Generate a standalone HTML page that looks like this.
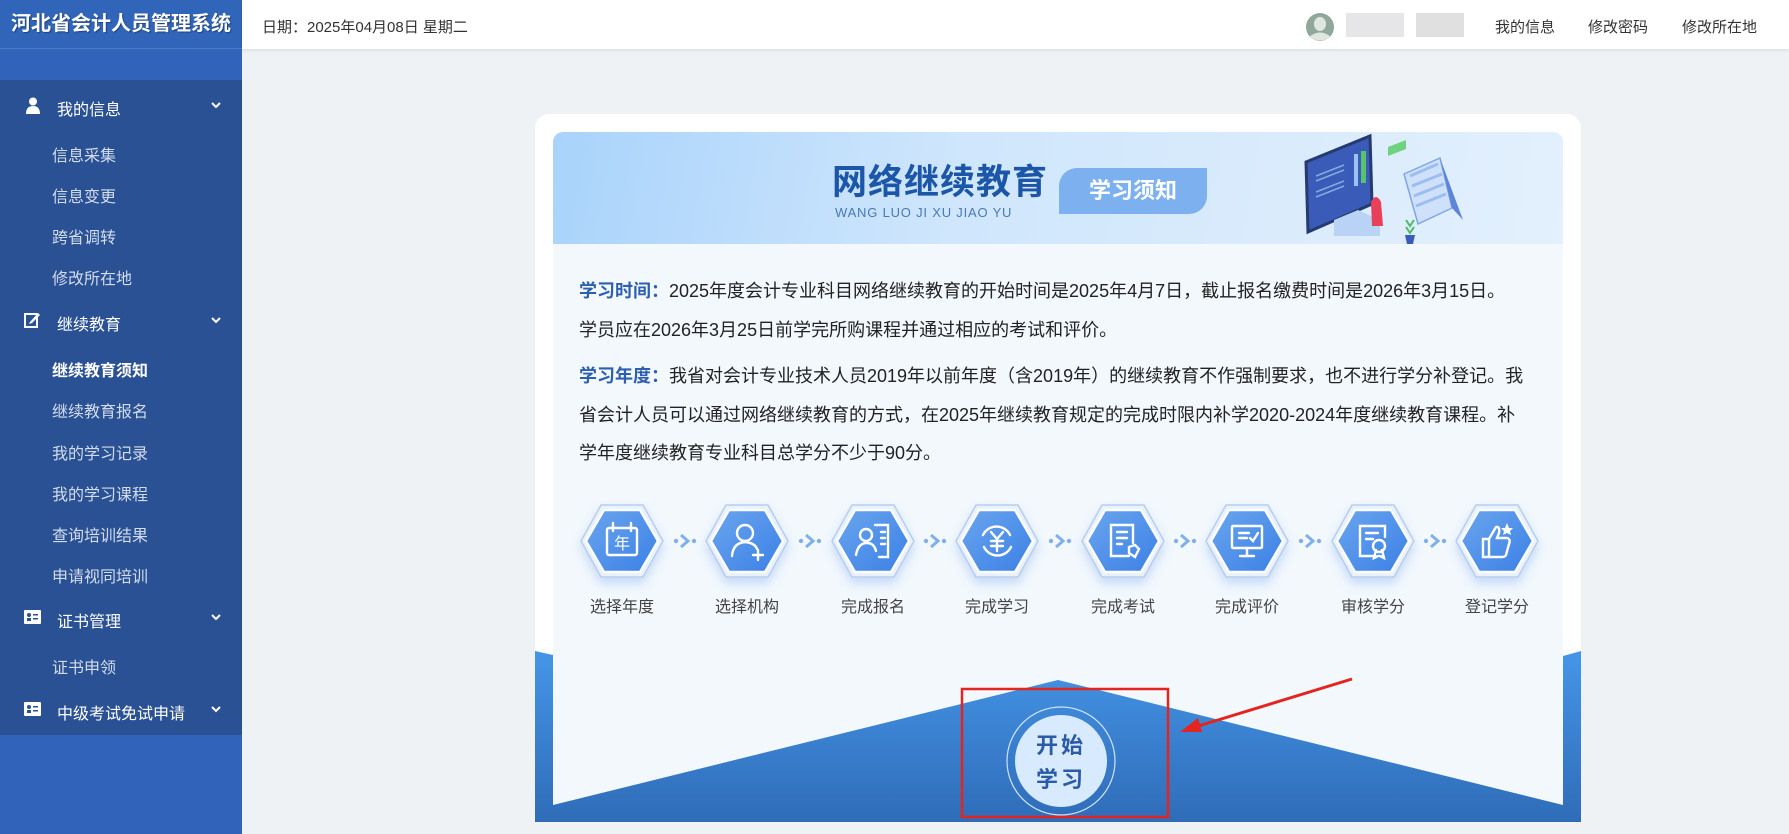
<!DOCTYPE html>
<html><head><meta charset="utf-8"><style>
*{margin:0;padding:0;box-sizing:border-box}
body{width:1789px;height:834px;overflow:hidden;background:#eef2f5;font-family:"Liberation Sans","Noto Sans CJK SC",sans-serif;position:relative}
.abs{position:absolute}
#side{left:0;top:0;width:242px;height:834px;background:#3063b9}
#logo{left:0;top:0;width:242px;height:49px;background:#3165b9;color:#fff;font-weight:bold;font-size:20px;line-height:49px;text-align:center;border-bottom:1px solid #4a7cc9;text-shadow:1px 1px 1px rgba(0,0,0,.35);white-space:nowrap}
#menu{left:0;top:80px;width:242px;height:655px;background:#2a5194}
.mh{position:absolute;left:57px;color:#fff;font-size:16px}
.mi{position:absolute;left:52px;color:#d3dcec;font-size:16px}
.chev{position:absolute;left:211px}
#top{left:242px;top:0;width:1547px;height:49px;background:#fff;box-shadow:0 1px 3px rgba(0,0,0,.1)}
.tx{position:absolute;top:16px;font-size:15px;color:#333}
#card{left:535px;top:114px;width:1046px;height:708px;background:#fff;border-radius:14px 14px 0 0}
#inner{left:553px;top:244px;width:1010px;height:578px;background:#f3f8fd}
#banner{left:553px;top:132px;width:1010px;height:112px;border-radius:10px 10px 0 0;background:linear-gradient(100deg,#a9d3fb 0%,#cfe6fc 40%,#d9ebfc 70%,#e3f0fd 100%)}
.p{position:absolute;left:579px;font-size:18px;color:#222;white-space:nowrap}
.p b{color:#2d5fb0}
</style></head><body>
<div id="side" class="abs"></div>
<div id="logo" class="abs">河北省会计人员管理系统</div>
<div id="menu" class="abs">
 <svg class="abs" style="left:25px;top:17px" width="16" height="18" viewBox="0 0 16 18"><circle cx="8" cy="4.5" r="4" fill="#fff"/><path d="M1 17 Q1 9 8 9 Q15 9 15 17Z" fill="#fff"/></svg>
 <div class="mh" style="top:16px">我的信息</div><svg class="chev" style="top:22px" width="10" height="8" viewBox="0 0 10 8"><path d="M1 1 L5 5 L9 1" stroke="#fff" stroke-width="2" fill="none"/></svg>
 <div class="mi" style="top:62px">信息采集</div>
 <div class="mi" style="top:103px">信息变更</div>
 <div class="mi" style="top:144px">跨省调转</div>
 <div class="mi" style="top:185px">修改所在地</div>
 <svg class="abs" style="left:24px;top:231px" width="17" height="17" viewBox="0 0 17 17"><rect x="1" y="3" width="12" height="13" fill="none" stroke="#fff" stroke-width="2"/><path d="M6 11 L14 2 L16 4 L8 12 L5 13Z" fill="#fff"/></svg>
 <div class="mh" style="top:231px">继续教育</div><svg class="chev" style="top:237px" width="10" height="8" viewBox="0 0 10 8"><path d="M1 1 L5 5 L9 1" stroke="#fff" stroke-width="2" fill="none"/></svg>
 <div class="mi" style="top:277px;color:#fff;font-weight:bold">继续教育须知</div>
 <div class="mi" style="top:318px">继续教育报名</div>
 <div class="mi" style="top:360px">我的学习记录</div>
 <div class="mi" style="top:401px">我的学习课程</div>
 <div class="mi" style="top:442px">查询培训结果</div>
 <div class="mi" style="top:483px">申请视同培训</div>
 <svg class="abs" style="left:24px;top:530px" width="17" height="14" viewBox="0 0 17 14"><rect x="0" y="0" width="17" height="14" rx="1" fill="#fff"/><circle cx="5" cy="5" r="2" fill="#2a5194"/><rect x="9" y="4" width="5" height="1.5" fill="#2a5194"/><rect x="9" y="8" width="5" height="1.5" fill="#2a5194"/><rect x="3" y="8" width="4" height="3" fill="#2a5194"/></svg>
 <div class="mh" style="top:528px">证书管理</div><svg class="chev" style="top:534px" width="10" height="8" viewBox="0 0 10 8"><path d="M1 1 L5 5 L9 1" stroke="#fff" stroke-width="2" fill="none"/></svg>
 <div class="mi" style="top:574px">证书申领</div>
 <svg class="abs" style="left:24px;top:622px" width="17" height="14" viewBox="0 0 17 14"><rect x="0" y="0" width="17" height="14" rx="1" fill="#fff"/><circle cx="5" cy="5" r="2" fill="#2a5194"/><rect x="9" y="4" width="5" height="1.5" fill="#2a5194"/><rect x="9" y="8" width="5" height="1.5" fill="#2a5194"/><rect x="3" y="8" width="4" height="3" fill="#2a5194"/></svg>
 <div class="mh" style="top:620px">中级考试免试申请</div><svg class="chev" style="top:626px" width="10" height="8" viewBox="0 0 10 8"><path d="M1 1 L5 5 L9 1" stroke="#fff" stroke-width="2" fill="none"/></svg>
</div>
<div id="top" class="abs">
 <div class="tx" style="left:20px">日期：2025年04月08日 星期二</div>
 <svg class="abs" style="left:1063px;top:12px" width="30" height="30" viewBox="0 0 30 30"><circle cx="15" cy="15" r="14" fill="#8fa89b"/><ellipse cx="15" cy="12" rx="6" ry="7" fill="#dfe6e2"/><path d="M4 25 Q15 16 26 25 Q15 32 4 25Z" fill="#dfe6e2"/></svg>
 <div class="abs" style="left:1104px;top:13px;width:58px;height:24px;background:#e6e6e8"></div>
 <div class="abs" style="left:1174px;top:13px;width:48px;height:24px;background:#e0e0e0"></div>
 <div class="tx" style="left:1253px">我的信息</div>
 <div class="tx" style="left:1346px">修改密码</div>
 <div class="tx" style="left:1440px">修改所在地</div>
</div>
<div id="card" class="abs"></div>
<div id="inner" class="abs"></div>
<div id="banner" class="abs">
 <div class="abs" style="left:279px;top:22px;font-size:35px;font-weight:bold;color:#1b56a8;letter-spacing:1px">网络继续教育</div>
 <div class="abs" style="left:282px;top:73px;font-size:13px;color:#4a78b5;letter-spacing:0.8px">WANG LUO JI XU JIAO YU</div>
 <div class="abs" style="left:506px;top:36px;width:148px;height:46px;background:#7db0ef;border-radius:18px 0 18px 0;color:#fff;font-weight:bold;font-size:22px;line-height:46px;text-align:center">学习须知</div>
 <svg class="abs" style="left:745px;top:0" width="180" height="112" viewBox="0 0 180 112">
  <path d="M8 30 L72 4 L74 72 L10 100Z" fill="#3a5bb7" stroke="#273a70" stroke-width="3"/>
  <rect x="56" y="22" width="4" height="32" fill="#9cc1f2"/><rect x="63" y="19" width="5" height="32" fill="#56c46a"/>
  <path d="M18 44 L46 33 M18 49 L46 38 M18 60 L46 49 M18 65 L46 54" stroke="#8aa8e0" stroke-width="1.5"/>
  <path d="M90 15 L108 8 L108 17 L90 24Z" fill="#6fd27e"/>
  <path d="M106 42 L142 26 L154 76 L120 92Z" fill="#cfe0fb" stroke="#7ea6e6" stroke-width="1.5"/>
  <path d="M112 44 L140 32 M114 54 L144 42 M116 64 L146 52 M118 74 L148 62" stroke="#9dbdf0" stroke-width="3"/>
  <path d="M142 26 L165 88 L154 76Z" fill="#5b86d6"/>
  <path d="M36 88 L60 78 L82 88 L82 104 L36 104Z" fill="#b9d3f6"/>
  <path d="M73 70 Q78 60 83 70 L85 94 L74 94Z" fill="#e8405b"/>
  <path d="M108 88 L112 94 L116 88 M108 95 L112 101 L116 95" stroke="#4cbb63" stroke-width="2" fill="none"/>
  <path d="M107 103 L117 103 L115 112 L109 112Z" fill="#3a5bb7"/>
 </svg>
</div>
<div class="p" style="top:277px"><b>学习时间：</b>2025年度会计专业科目网络继续教育的开始时间是2025年4月7日，截止报名缴费时间是2026年3月15日。</div>
<div class="p" style="top:316px">学员应在2026年3月25日前学完所购课程并通过相应的考试和评价。</div>
<div class="p" style="top:362px"><b>学习年度：</b>我省对会计专业技术人员2019年以前年度（含2019年）的继续教育不作强制要求，也不进行学分补登记。我</div>
<div class="p" style="top:401px">省会计人员可以通过网络继续教育的方式，在2025年继续教育规定的完成时限内补学2020-2024年度继续教育课程。补</div>
<div class="p" style="top:439px">学年度继续教育专业科目总学分不少于90分。</div>

<svg class="abs" style="left:0;top:0" width="1789" height="834" viewBox="0 0 1789 834">
 <defs>
  <linearGradient id="hg" x1="0" y1="0" x2="1" y2="1"><stop offset="0" stop-color="#6aa5ee"/><stop offset="1" stop-color="#3b80e6"/></linearGradient>
  <linearGradient id="bg" x1="0" y1="0" x2="0" y2="1"><stop offset="0" stop-color="#4596e8"/><stop offset="1" stop-color="#2f6cb8"/></linearGradient>
  <filter id="sh" x="-30%" y="-30%" width="160%" height="170%"><feDropShadow dx="0" dy="6" stdDeviation="5" flood-color="#3b80e6" flood-opacity=".25"/></filter>
  <g id="hex"><path d="M-41 0 L-21 -36 L21 -36 L41 0 L21 36 L-21 36Z" fill="#e8f1fc" stroke="#b8cdee" stroke-width="1.5" filter="url(#sh)"/><path d="M-36 0 L-18 -31 L18 -31 L36 0 L18 31 L-18 31Z" fill="url(#hg)"/></g>
  <g id="arr" fill="#7fb0ea"><circle cx="-9" cy="0" r="2.2"/><path d="M-4 -6 L3 0 L-4 6" stroke="#7fb0ea" stroke-width="3" fill="none"/><circle cx="9" cy="0" r="2.2"/></g>
 </defs>
 <g stroke="#fff" stroke-width="2.4" fill="none" stroke-linecap="round">
 <g transform="translate(622,541)"><use href="#hex"/><rect x="-15" y="-13" width="30" height="27" rx="2"/><path d="M-9 -18 V-10 M9 -18 V-10"/><text x="0" y="8" fill="#fff" stroke="none" font-size="16" text-anchor="middle" font-family="Noto Sans CJK SC">年</text></g>
 <g transform="translate(747,541)"><use href="#hex"/><circle cx="-2" cy="-8" r="8"/><path d="M-15 15 Q-14 2 -2 1 Q8 2 10 8 M11 9 V19 M6 14 H16"/></g>
 <g transform="translate(873,541)"><use href="#hex"/><circle cx="-7" cy="-6" r="6"/><path d="M-17 14 Q-15 2 -6 2 Q1 2 3 10 M2 -16 H15 V16 H6 M8 -9 H12 M8 -3 H12 M8 3 H12"/></g>
 <g transform="translate(997,541)"><use href="#hex"/><path d="M-14 -6 A15 15 0 0 1 13 -6 M14 6 A15 15 0 0 1 -13 6 M-6 -9 L0 -2 L6 -9 M0 -2 V10 M-6 0 H6 M-6 5 H6"/></g>
 <g transform="translate(1123,541)"><use href="#hex"/><path d="M6 15 H-12 V-16 H10 V2 M-6 -9 H4 M-6 -3 H4 M-6 3 H-1 M6 6 L12 4 L16 8 L12 16 L6 12Z"/></g>
 <g transform="translate(1247,541)"><use href="#hex"/><rect x="-15" y="-15" width="30" height="22" rx="1"/><path d="M-8 -8 H2 M-8 -3 H0 M3 -3 L6 0 L11 -8 M0 7 V14 M-7 15 H7"/></g>
 <g transform="translate(1373,541)"><use href="#hex"/><path d="M2 15 H-13 V-15 H12 V-4 M-7 -8 H5 M-7 -2 H0"/><circle cx="6" cy="5" r="6"/><path d="M3 9 L1 17 L5 15 M9 9 L11 17 L7 15"/></g>
 <g transform="translate(1497,541)"><use href="#hex"/><path d="M-14 -2 H-8 V16 H-14Z M-8 -2 L-1 -14 Q3 -15 2 -8 L0 -3 H10 Q14 -2 12 3 L9 14 Q8 16 5 16 H-8"/><path d="M10 -18 L12 -13 L16 -13 L13 -10 L14 -6 L10 -8 L6 -6 L7 -10 L4 -13 L8 -13Z" fill="#fff" stroke="none"/></g>
 </g>
 <use href="#arr" x="685" y="541"/><use href="#arr" x="810" y="541"/><use href="#arr" x="935" y="541"/><use href="#arr" x="1060" y="541"/><use href="#arr" x="1185" y="541"/><use href="#arr" x="1310" y="541"/><use href="#arr" x="1435" y="541"/>
 <path d="M535 651 L553 655 L553 805 L1058 680 L1563 805 L1563 656 L1581 651 L1581 822 L535 822Z" fill="url(#bg)"/>
 <circle cx="1061" cy="761" r="54" fill="none" stroke="#cfe2fa" stroke-width="1.2"/>
 <circle cx="1061" cy="761" r="46" fill="#d8eafd"/>
 <text x="1061" y="753" font-size="22" font-weight="bold" fill="#2a5ba8" text-anchor="middle" font-family="Liberation Sans,Noto Sans CJK SC" letter-spacing="3">开始</text>
 <text x="1061" y="787" font-size="22" font-weight="bold" fill="#2a5ba8" text-anchor="middle" font-family="Liberation Sans,Noto Sans CJK SC" letter-spacing="3">学习</text>
 <rect x="962" y="689" width="206" height="128" fill="none" stroke="#e3251f" stroke-width="2.5"/>
 <path d="M1352 679 L1195 727" stroke="#e3251f" stroke-width="3"/>
 <path d="M1180 732 L1198 718 L1202 732Z" fill="#e3251f"/>
 <g font-family="Liberation Sans,Noto Sans CJK SC" font-size="16" fill="#444" text-anchor="middle">
 <text x="622" y="612">选择年度</text><text x="747" y="612">选择机构</text><text x="873" y="612">完成报名</text><text x="997" y="612">完成学习</text><text x="1123" y="612">完成考试</text><text x="1247" y="612">完成评价</text><text x="1373" y="612">审核学分</text><text x="1497" y="612">登记学分</text>
 </g>
</svg>
</body></html>
